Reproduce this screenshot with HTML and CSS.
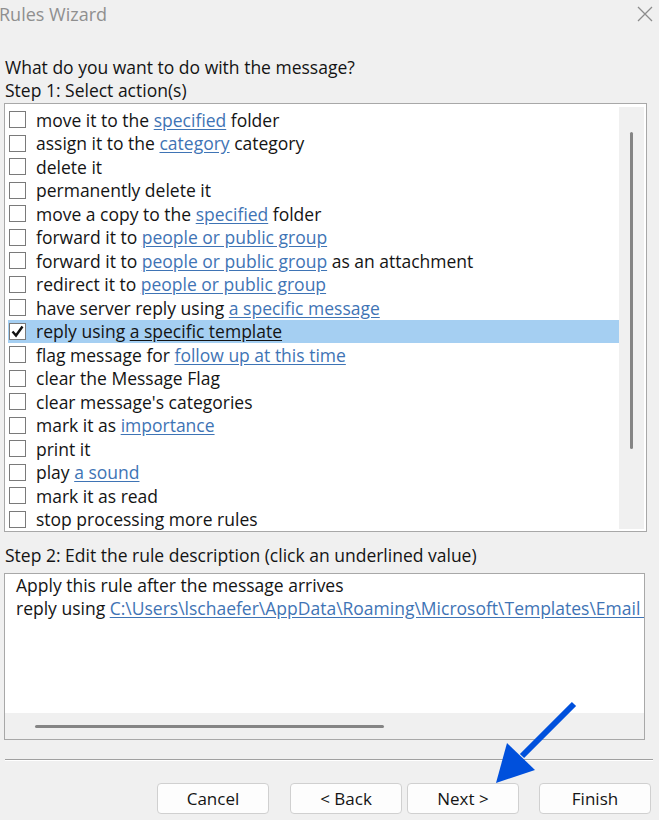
FILE: index.html
```html
<!DOCTYPE html>
<html>
<head>
<meta charset="utf-8">
<link rel="stylesheet" href="styles.css">
</head>
<body>
<div class="window">
  <div class="titlebar">
    <span class="title">Rules Wizard</span>
    <svg class="close" width="18" height="18" viewBox="0 0 18 18"><path d="M2 2 L16 16 M16 2 L2 16" stroke="#8c8c8c" stroke-width="1.3" fill="none"/></svg>
  </div>
  <div class="content">
    <div class="label q">What do you want to do with the message?</div>
    <div class="label">Step 1: Select action(s)</div>
    <div class="listbox">
      <div class="rows">
        <div class="row"><span class="cb"></span><span>move it to the <a>specified</a> folder</span></div>
        <div class="row"><span class="cb"></span><span>assign it to the <a>category</a> category</span></div>
        <div class="row"><span class="cb"></span><span>delete it</span></div>
        <div class="row"><span class="cb"></span><span>permanently delete it</span></div>
        <div class="row"><span class="cb"></span><span>move a copy to the <a>specified</a> folder</span></div>
        <div class="row"><span class="cb"></span><span>forward it to <a>people or public group</a></span></div>
        <div class="row"><span class="cb"></span><span>forward it to <a>people or public group</a> as an attachment</span></div>
        <div class="row"><span class="cb"></span><span>redirect it to <a>people or public group</a></span></div>
        <div class="row"><span class="cb"></span><span>have server reply using <a>a specific message</a></span></div>
        <div class="row selected"><span class="cb checked"><svg width="15" height="15" viewBox="0 0 15 15"><path d="M2.5 7.5 L6 11.5 L12.5 2.5" stroke="#111" stroke-width="2.4" fill="none"/></svg></span><span>reply using <a class="sel">a specific template</a></span></div>
        <div class="row"><span class="cb"></span><span>flag message for <a>follow up at this time</a></span></div>
        <div class="row"><span class="cb"></span><span>clear the Message Flag</span></div>
        <div class="row"><span class="cb"></span><span>clear message's categories</span></div>
        <div class="row"><span class="cb"></span><span>mark it as <a>importance</a></span></div>
        <div class="row"><span class="cb"></span><span>print it</span></div>
        <div class="row"><span class="cb"></span><span>play <a>a sound</a></span></div>
        <div class="row"><span class="cb"></span><span>mark it as read</span></div>
        <div class="row"><span class="cb"></span><span>stop processing more rules</span></div>
      </div>
      <div class="vscroll"><div class="vthumb"></div></div>
    </div>
    <div class="label step2">Step 2: Edit the rule description (click an underlined value)</div>
    <div class="descbox">
      <div class="desctext">
        <div class="dline">Apply this rule after the message arrives</div>
        <div class="dline">reply using <a>C:\Users\lschaefer\AppData\Roaming\Microsoft\Templates\Email Auto Reply.oft</a></div>
      </div>
      <div class="hscroll"><div class="hthumb"></div></div>
    </div>
    <div class="sep"></div>
    <div class="buttons">
      <button class="btn cancel">Cancel</button>
      <button class="btn back">&lt; Back</button>
      <button class="btn next">Next &gt;</button>
      <button class="btn finish">Finish</button>
    </div>
  </div>
  <svg class="arrow" width="659" height="820" viewBox="0 0 659 820">
    <line x1="574" y1="704" x2="522" y2="756" stroke="#0050dc" stroke-width="6" stroke-linecap="butt"/>
    <polygon points="496,783 507,743 535,770" fill="#0050dc"/>
  </svg>
</div>
</body>
</html>
```

FILE: styles.css
```css
* { box-sizing: border-box; }
html, body { margin: 0; padding: 0; }
body {
  background: #f0f0f0;
  font-family: "Open Sans", "Noto Sans", sans-serif;
  font-size: 17.5px;
  color: #141414;
}
.window {
  position: relative;
  width: 659px;
  height: 820px;
  overflow: hidden;
}
.titlebar {
  height: 56px;
  display: flex;
  justify-content: space-between;
  align-items: flex-start;
  padding: 2px 5px 0 0;
}
.title {
  font-size: 18px;
  color: #8f8f8f;
  margin-left: -1px;
  line-height: 24px;
}
.close { margin-top: 3px; }
.content { padding-left: 4px; }
.label {
  line-height: 23px;
  padding-left: 1px;
  white-space: nowrap;
}
.listbox {
  margin-top: 1px;
  width: 643px;
  height: 429px;
  border: 1px solid #a8a8a8;
  background: #fff;
  display: flex;
  padding: 3px 2px 2px 0;
}
.rows {
  flex: 1;
  padding-left: 3px;
  padding-top: 1px;
}
.row {
  height: 23.5px;
  display: flex;
  align-items: center;
  white-space: nowrap;
  padding-left: 1px;
}
.row.selected { background: #a5cff2; }
.cb {
  width: 17px;
  height: 17px;
  border: 1px solid #7a7a7a;
  background: #fff;
  margin-right: 10px;
  flex: none;
  display: flex;
  align-items: center;
  justify-content: center;
}
a { color: #3f74b5; text-decoration: underline; text-underline-offset: 2px; }
a.sel { color: #141414; }
.vscroll {
  width: 25px;
  background: #f0f0f0;
  display: flex;
  justify-content: center;
  padding-top: 25px;
}
.vthumb {
  width: 3px;
  height: 317px;
  background: #858585;
  border-radius: 2px;
}
.step2 { margin-top: 12px; }
.descbox {
  margin-top: 6px;
  width: 641px;
  height: 167px;
  border: 1px solid #a8a8a8;
  background: #fff;
  display: flex;
  flex-direction: column;
  overflow: hidden;
}
.desctext {
  flex: 1;
  padding: 0 0 0 11px;
  overflow: hidden;
}
.dline { line-height: 23px; white-space: nowrap; }
.hscroll {
  height: 26px;
  background: #f0f0f0;
  display: flex;
  align-items: center;
  padding-left: 30px;
  flex: none;
}
.hthumb {
  width: 349px;
  height: 3px;
  background: #858585;
  border-radius: 2px;
}
.sep {
  margin-top: 19px;
  width: 648px;
  margin-left: 1px;
  height: 2px;
  background: #a0a0a0;
  border-bottom: 1px solid #fff;
}
.buttons {
  display: flex;
  margin-top: 22px;
  padding-left: 153px;
}
.btn {
  width: 112px;
  height: 31px;
  border: 1px solid #d0d0d0;
  border-radius: 4px;
  background: #fdfdfd;
  font-family: inherit;
  font-size: 17px;
  color: #141414;
  padding: 0;
}
.back { margin-left: 21px; }
.next { margin-left: 5px; }
.finish { margin-left: 20px; }
.arrow {
  position: absolute;
  left: 0;
  top: 0;
  pointer-events: none;
}
```
